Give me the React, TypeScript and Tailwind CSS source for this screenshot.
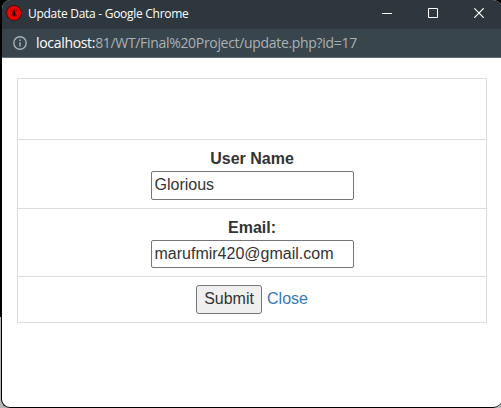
import type { ReactNode } from "react";

function TitleBar() {
  return (
    <header className="flex h-[29px] items-start bg-[#2d373d]">
      <svg className="ml-1 mt-[5px] h-4 w-4 shrink-0" viewBox="0 0 16 16">
        <circle cx="8" cy="8" r="7.4" fill="#f00505" stroke="#3a0808" strokeWidth="0.8" />
        <path d="M8 3v9M6.5 7L5 4.2M9.5 7L11 4.2M6.5 9L5 11.5M9.5 9l1.5 2.5" stroke="#8a0000" strokeWidth="0.9" fill="none" />
        <ellipse cx="8" cy="8.8" rx="1.6" ry="2.6" fill="#180505" />
        <circle cx="8" cy="5.8" r="0.9" fill="#300505" />
      </svg>
      <h1 className="ml-[6px] mt-[5px] whitespace-nowrap font-['Open_Sans','Noto_Sans',sans-serif] text-[12px] leading-[18px] tracking-[-0.28px] text-white">
        Update Data - Google Chrome
      </h1>
      <div className="ml-auto mr-[18px] mt-2 flex gap-[36px]">
        <svg className="h-[10px] w-[10px]" viewBox="0 0 10 10" fill="none" stroke="#fff">
          <path d="M0 5.5h10" />
        </svg>
        <svg className="h-[10px] w-[10px]" viewBox="0 0 10 10" fill="none" stroke="#fff">
          <path d="M.5.5h9v9h-9z" />
        </svg>
        <svg className="h-[10px] w-[10px]" viewBox="0 0 10 10" fill="none" stroke="#fff" strokeWidth="1.2">
          <path d="M.3.3l9.4 9.4M9.7.3L.3 9.7" />
        </svg>
      </div>
    </header>
  );
}

function AddressBar() {
  return (
    <div className="flex h-[29px] items-start border-b border-[#607078] bg-[#39454c]">
      <svg className="ml-[11px] mt-[7px] h-[14px] w-[14px] shrink-0" viewBox="0 0 14 14" fill="none" stroke="#a9b0b4" strokeWidth="1.4">
        <circle cx="7" cy="7" r="6.2" />
        <path d="M7 6.2v4.2M7 3.5v1.5" />
      </svg>
      <p className="ml-[9px] mt-1 whitespace-nowrap font-['Open_Sans','Noto_Sans',sans-serif] text-[14px] leading-5 tracking-[-0.32px] text-[#aab1b5]">
        <span className="text-white">localhost:</span>81/WT/Final%20Project/update.php?id=17
      </p>
    </div>
  );
}

function Field({ label, value, className }: { label: string; value: string; className: string }) {
  return (
    <label className="flex flex-col items-center">
      <span className="mb-[2px] font-bold leading-[21px]">{label}</span>
      <input
        defaultValue={value}
        className={`w-[203px] rounded-[2px] border border-[#767676] bg-white pl-[3px] outline-none ${className}`}
      />
    </label>
  );
}

function Row({ className, children }: { className: string; children?: ReactNode }) {
  return <div className={`border-b border-[#ddd] ${className}`}>{children}</div>;
}

export default function App() {
  return (
    <div className="h-[408px] w-[501px] overflow-hidden bg-[linear-gradient(#000_317px,#b5b5b5_317px)]">
      <div className="h-full w-[502px] pl-px">
        <div className="h-full overflow-hidden rounded-[9px] border-b border-l border-black bg-white">
          <TitleBar />
          <AddressBar />
          <form
            className="ml-[15px] mt-5 w-[470px] border-x border-t border-[#ddd] font-['Liberation_Sans',Arial,sans-serif] text-[16px] text-[#333]"
            onSubmit={(e) => e.preventDefault()}
          >
            <Row className="h-[61px]" />
            <Row className="h-[69px] pt-2">
              <Field label="User Name" value="Glorious" className="h-[29px] pb-[2px]" />
            </Row>
            <Row className="h-[68px] pt-2">
              <Field label="Email:" value="marufmir420@gmail.com" className="h-[28px]" />
            </Row>
            <Row className="flex h-[46px] items-start justify-center gap-[5px] pt-2">
              <button className="h-[29px] w-[66px] rounded-[3px] border border-[#767676] bg-[#efefef] pb-[2px]">Submit</button>
              <a href="#" className="leading-[28px] text-[#337ab7]">Close</a>
            </Row>
          </form>
        </div>
      </div>
    </div>
  );
}
